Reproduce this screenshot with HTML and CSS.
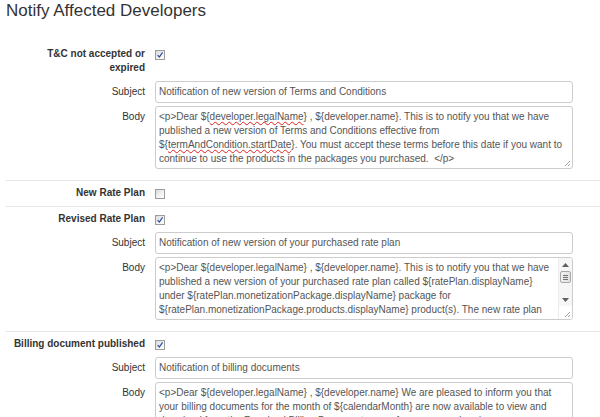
FILE: index.html
```html
<!DOCTYPE html>
<html>
<head>
<meta charset="utf-8">
<title>Notify Affected Developers</title>
<link rel="stylesheet" href="styles.css">
</head>
<body>
<div class="page">
  <h1 class="title">Notify Affected Developers</h1>

  <section class="group first">
    <div class="row check-row">
      <div class="lbl bold">T&amp;C not accepted or<br>expired</div>
      <div class="ctl"><span class="cb checked"><svg viewBox="0 0 8 8" width="8" height="8"><path d="M1.6 4.2 L3.3 6 L6.6 1.4" fill="none" stroke="#2c4d9e" stroke-width="1.2"/></svg></span></div>
    </div>
    <div class="row field-row">
      <div class="lbl lbl-input">Subject</div>
      <div class="ctl"><div class="input">Notification of new version of Terms and Conditions</div></div>
    </div>
    <div class="row body-row">
      <div class="lbl lbl-body">Body</div>
      <div class="ctl">
        <div class="textarea">
          <div class="ta-text">&lt;p&gt;Dear ${<span class="spell">developer.legalName</span>} , ${developer.name}. This is to notify you that we have<br>published a new version of Terms and Conditions effective from<br>${<span class="spell">termAndCondition.startDate</span>}. You must accept these terms before this date if you want to<br>continue to use the products in the packages you purchased.&nbsp; &lt;/p&gt;</div>
          <span class="grip"><svg viewBox="0 0 8 8" width="8" height="8"><path d="M7 2 L2 7 M7 5 L5 7" stroke="#a0a0a0" stroke-width="1"/></svg></span>
        </div>
      </div>
    </div>
  </section>

  <section class="group">
    <div class="row check-row">
      <div class="lbl bold">New Rate Plan</div>
      <div class="ctl"><span class="cb"></span></div>
    </div>
  </section>

  <section class="group">
    <div class="row check-row">
      <div class="lbl bold">Revised Rate Plan</div>
      <div class="ctl"><span class="cb checked"><svg viewBox="0 0 8 8" width="8" height="8"><path d="M1.6 4.2 L3.3 6 L6.6 1.4" fill="none" stroke="#2c4d9e" stroke-width="1.2"/></svg></span></div>
    </div>
    <div class="row field-row">
      <div class="lbl lbl-input">Subject</div>
      <div class="ctl"><div class="input">Notification of new version of your purchased rate plan</div></div>
    </div>
    <div class="row body-row">
      <div class="lbl lbl-body">Body</div>
      <div class="ctl">
        <div class="textarea scroll">
          <div class="ta-text">&lt;p&gt;Dear ${developer.legalName} , ${developer.name}. This is to notify you that we have<br>published a new version of your purchased rate plan called ${ratePlan.displayName}<br>under ${ratePlan.monetizationPackage.displayName} package for<br>${ratePlan.monetizationPackage.products.displayName} product(s). The new rate plan</div>
          <div class="sbar">
            <div class="sbtn"><svg viewBox="0 0 7 4" width="7" height="4"><path d="M0 4 L3.5 0 L7 4 Z" fill="#606060"/></svg></div>
            <div class="thumb"><span></span><span></span><span></span></div>
            <div class="track"></div>
            <div class="sbtn"><svg viewBox="0 0 7 4" width="7" height="4"><path d="M0 0 L3.5 4 L7 0 Z" fill="#606060"/></svg></div>
            <div class="corner"></div>
          </div>
          <span class="grip"><svg viewBox="0 0 8 8" width="8" height="8"><path d="M7 2 L2 7 M7 5 L5 7" stroke="#a0a0a0" stroke-width="1"/></svg></span>
        </div>
      </div>
    </div>
  </section>

  <section class="group">
    <div class="row check-row">
      <div class="lbl bold">Billing document published</div>
      <div class="ctl"><span class="cb checked"><svg viewBox="0 0 8 8" width="8" height="8"><path d="M1.6 4.2 L3.3 6 L6.6 1.4" fill="none" stroke="#2c4d9e" stroke-width="1.2"/></svg></span></div>
    </div>
    <div class="row field-row">
      <div class="lbl lbl-input">Subject</div>
      <div class="ctl"><div class="input">Notification of billing documents</div></div>
    </div>
    <div class="row body-row">
      <div class="lbl lbl-body">Body</div>
      <div class="ctl">
        <div class="textarea">
          <div class="ta-text">&lt;p&gt;Dear ${developer.legalName} , ${developer.name} We are pleased to inform you that<br>your billing documents for the month of ${calendarMonth} are now available to view and<br>download from the Received Billing Documents page for your records. &lt;/p&gt;</div>
        </div>
      </div>
    </div>
  </section>
</div>
</body>
</html>
```

FILE: styles.css
```css
html, body {
  margin: 0;
  padding: 0;
  background: #fff;
  height: 417px;
  overflow: hidden;
}

body {
  font-family: "Liberation Sans", Arial, sans-serif;
  color: #333;
}

.page {
  padding-left: 6px;
}

.title {
  margin: 0 0 20px 0;
  padding-top: 1px;
  font-size: 17px;
  line-height: 20px;
  font-weight: normal;
  color: #333;
}

.group {
  padding: 5px 0 6px 0;
  border-top: 1px solid #e6e6e6;
}

.group.first {
  border-top-color: transparent;
}

.row {
  display: grid;
  grid-template-columns: 139px 418px;
  column-gap: 10px;
}

.field-row {
  margin-top: 6px;
}

.body-row {
  margin-top: 3px;
  margin-bottom: 5px;
}

.lbl {
  text-align: right;
  font-size: 10px;
  line-height: 14px;
  color: #333;
}

.lbl.bold {
  font-weight: bold;
}

.lbl-input {
  line-height: 22px;
}

.lbl-body {
  padding-top: 4px;
}

.cb {
  display: flex;
  align-items: center;
  justify-content: center;
  box-sizing: border-box;
  width: 10px;
  height: 10px;
  margin-top: 3px;
  border: 1px solid #9c9c9c;
  background: linear-gradient(135deg, #d9d9d9 0%, #f4f4f4 60%, #ffffff 100%);
}

.cb svg {
  display: block;
}

.input {
  box-sizing: border-box;
  height: 22px;
  border: 1px solid #cccccc;
  border-radius: 3px;
  padding: 0 3px;
  font-size: 10px;
  line-height: 20px;
  color: #555;
  white-space: nowrap;
  overflow: hidden;
}

.textarea {
  position: relative;
  box-sizing: border-box;
  height: 63px;
  border: 1px solid #cccccc;
  border-radius: 3px;
  font-size: 10px;
  line-height: 14px;
  color: #555;
  overflow: hidden;
  display: flex;
}

.ta-text {
  flex: 1;
  padding: 3px 3px 2px 3px;
  white-space: nowrap;
  overflow: hidden;
}

.spell {
  text-decoration: underline wavy #e02020;
  text-decoration-thickness: 1px;
  text-decoration-skip-ink: none;
  text-underline-offset: 1px;
}

.grip {
  position: absolute;
  right: 1px;
  bottom: 1px;
  width: 8px;
  height: 8px;
}

.grip svg {
  display: block;
}

.sbar {
  width: 13px;
  display: flex;
  flex-direction: column;
  background: #f6f6f6;
  border-left: 1px solid #ececec;
}

.sbtn {
  height: 13px;
  display: flex;
  align-items: center;
  justify-content: center;
}

.sbtn svg {
  display: block;
}

.thumb {
  box-sizing: border-box;
  height: 12px;
  margin: 0 1px;
  border: 1px solid #a8a8a8;
  border-radius: 2px;
  background: linear-gradient(90deg, #f0f0f0, #e2e2e2);
  display: flex;
  flex-direction: column;
  align-items: center;
  justify-content: center;
  gap: 1px;
}

.thumb span {
  display: block;
  width: 5px;
  height: 1px;
  background: #707070;
}

.track {
  height: 10px;
}

.corner {
  height: 13px;
  background: #fff;
}
```
